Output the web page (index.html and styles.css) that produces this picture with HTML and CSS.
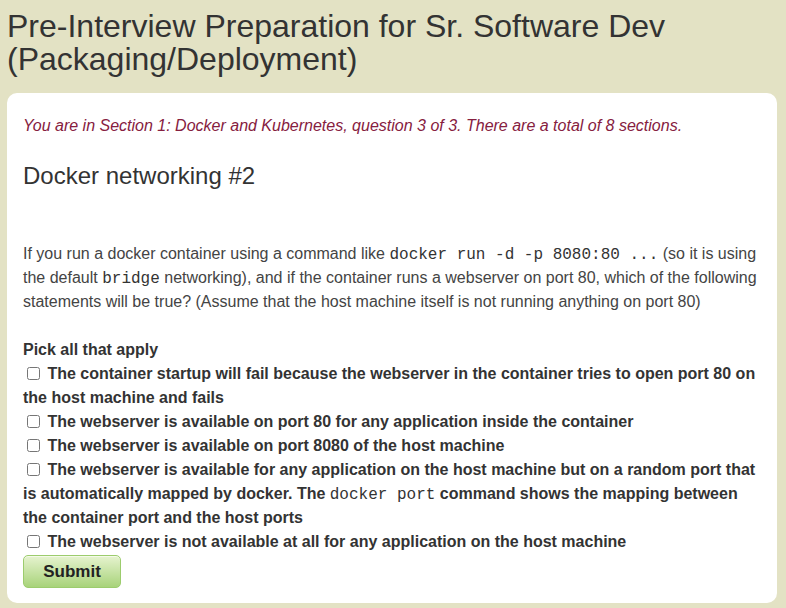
FILE: index.html
```html
<!DOCTYPE html>
<html>
<head>
<meta charset="utf-8">
<link rel="stylesheet" href="styles.css">
</head>
<body>
<h1 class="title">Pre-Interview Preparation for Sr. Software Dev (Packaging/Deployment)</h1>
<div class="card">
  <p class="where">You are in Section 1: Docker and Kubernetes, question 3 of 3. There are a total of 8 sections.</p>
  <h2 class="qtitle">Docker networking #2</h2>
  <p class="question">If you run a docker container using a command like <code>docker run -d -p 8080:80 ...</code> (so it is using the default <code>bridge</code> networking), and if the container runs a webserver on port 80, which of the following statements will be true? (Assume that the host machine itself is not running anything on port 80)</p>
  <form class="answers">
    <div class="pick">Pick all that apply</div>
    <label class="opt"><input type="checkbox"> The container startup will fail because the webserver in the container tries to open port 80 on the host machine and fails</label>
    <label class="opt"><input type="checkbox"> The webserver is available on port 80 for any application inside the container</label>
    <label class="opt"><input type="checkbox"> The webserver is available on port 8080 of the host machine</label>
    <label class="opt"><input type="checkbox"> The webserver is available for any application on the host machine but on a random port that is automatically mapped by docker. The <code>docker port</code> command shows the mapping between the container port and the host ports</label>
    <label class="opt"><input type="checkbox"> The webserver is not available at all for any application on the host machine</label>
    <button type="button" class="submit">Submit</button>
  </form>
</div>
</body>
</html>
```
FILE: styles.css
```css
html, body {
  margin: 0;
  padding: 0;
}
body {
  background: #e3e2c4;
  font-family: "Liberation Sans", Arial, sans-serif;
  color: #333;
  padding: 0 9px 0 7px;
  height: 608px;
  box-sizing: border-box;
  overflow: hidden;
}
.title {
  font-size: 32px;
  font-weight: normal;
  line-height: 33px;
  margin: 10px 0 0 0;
  padding-bottom: 17px;
  color: #333;
}
.card {
  background: #fff;
  border-radius: 10px;
  padding: 16px 16px 16px 16px;
  height: 510px;
  box-sizing: border-box;
}
.where {
  font-style: italic;
  font-size: 16px;
  color: #862040;
  margin: 8px 0 0 0;
  line-height: 18px;
}
.qtitle {
  font-size: 24px;
  font-weight: normal;
  margin: 27px 0 0 0;
  line-height: 28px;
  color: #333;
}
.question {
  font-size: 16px;
  line-height: 24px;
  margin: 52px 0 0 0;
  color: #444;
}
code {
  font-family: "Liberation Mono", "DejaVu Sans Mono", monospace;
  font-size: 16px;
  line-height: 1;
  color: #333;
}
.answers {
  margin-top: 24px;
  font-weight: bold;
  font-size: 16px;
  line-height: 24px;
  color: #333;
}
.opt {
  display: block;
}
.opt code {
  font-weight: normal;
}
.opt input {
  margin: 0 3px 0 4px;
  width: 13px;
  height: 13px;
  vertical-align: -1px;
}
.submit {
  margin-top: 1px;
  font-family: "Liberation Sans", Arial, sans-serif;
  font-weight: bold;
  font-size: 17px;
  color: #222;
  width: 98px;
  height: 33px;
  border: 1px solid #9ccc6d;
  border-radius: 5px;
  background: linear-gradient(#e6f3cf, #a8d37a);
  box-shadow: inset 0 1px 0 #f4fae8;
  cursor: pointer;
}
```
